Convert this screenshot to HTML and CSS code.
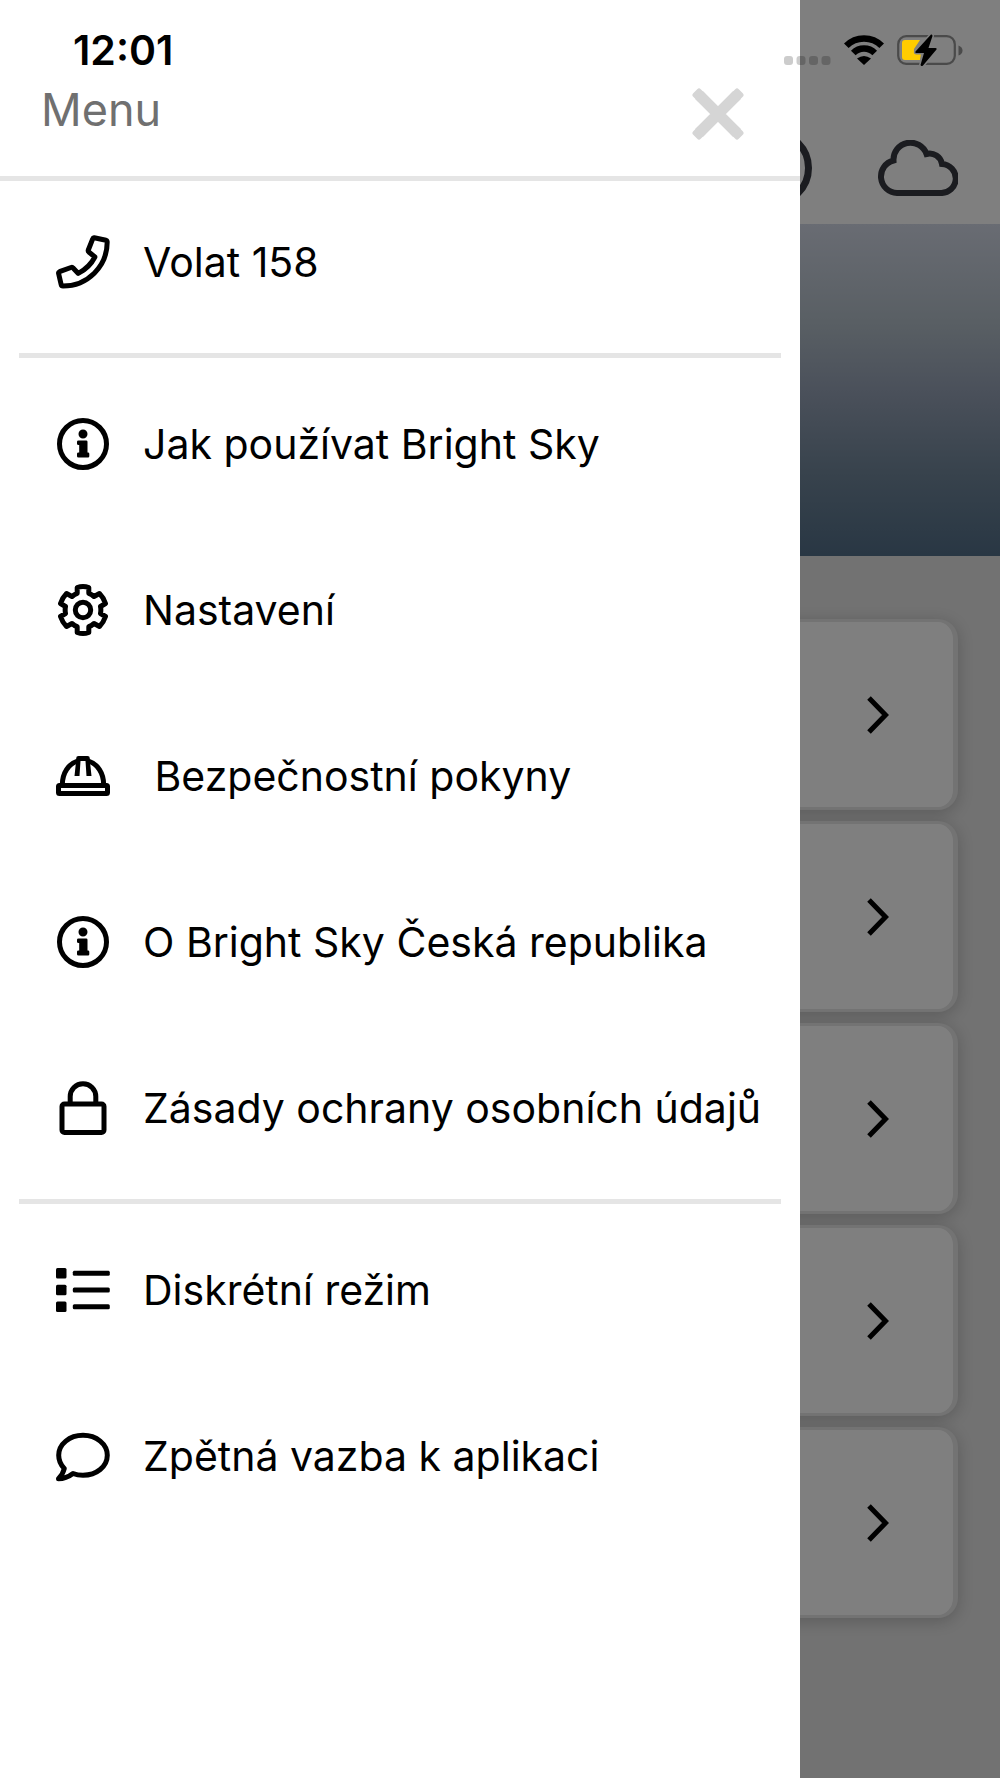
FILE: index.html
```html
<!DOCTYPE html>
<html lang="cs">
<head>
<meta charset="utf-8">
<meta name="viewport" content="width=device-width, initial-scale=1">
<title>Bright Sky – Menu</title>
<link rel="stylesheet" href="styles.css">
</head>
<body>
<div class="screen">
  <div class="page">
    <header class="topbar">
      <button class="icon-button" type="button" aria-label="Profil">
        <svg width="78" height="78" viewBox="0 0 78 78" fill="none" stroke="currentColor" stroke-width="7"><circle cx="39" cy="39" r="35.5"/></svg>
      </button>
      <button class="icon-button" type="button" aria-label="Rychlé opuštění">
        <svg width="81" height="56" viewBox="0 0 81 56" fill="none" stroke="currentColor" stroke-width="6"><path d="M20 53H63.500A14.500 14.500 0 0 0 65 24A12.500 12.500 0 0 0 49.500 14A17 17 0 0 0 16.500 20.500A16.500 16.500 0 0 0 20 53Z"/></svg>
      </button>
    </header>
    <div class="hero"></div>
    <main class="cards">
      <a class="card" href="#" aria-label="Karta 1"><svg class="chevron" viewBox="0 0 22 38"><path d="M2 2L18.500 19L2 36"/></svg></a>
      <a class="card" href="#" aria-label="Karta 2"><svg class="chevron" viewBox="0 0 22 38"><path d="M2 2L18.500 19L2 36"/></svg></a>
      <a class="card" href="#" aria-label="Karta 3"><svg class="chevron" viewBox="0 0 22 38"><path d="M2 2L18.500 19L2 36"/></svg></a>
      <a class="card" href="#" aria-label="Karta 4"><svg class="chevron" viewBox="0 0 22 38"><path d="M2 2L18.500 19L2 36"/></svg></a>
      <a class="card" href="#" aria-label="Karta 5"><svg class="chevron" viewBox="0 0 22 38"><path d="M2 2L18.500 19L2 36"/></svg></a>
    </main>
  </div>

  <div class="scrim"></div>

  <aside class="drawer">
    <header class="drawer-header">
      <h1 class="drawer-title">Menu</h1>
      <button class="close" type="button" aria-label="Zavřít">
        <svg width="52" height="52" viewBox="0 0 52 52"><path d="M7 7L45 45M45 7L7 45" stroke="currentColor" stroke-width="11"/><path d="M7 3L3 7L7 11L11 7ZM45 3L49 7L45 11L41 7ZM7 49L3 45L7 41L11 45ZM45 49L49 45L45 41L41 45Z" fill="currentColor" stroke="currentColor" stroke-width="5" stroke-linejoin="round"/></svg>
      </button>
    </header>
    <nav class="menu">
      <ul class="menu-group">
        <li><a class="item" href="#">
          <svg class="icon" viewBox="0 0 54 54"><path d="M38.200 2.700L50 5.300Q51.200 5.700 51.200 7C51.200 31.500 31.500 51 7 51Q5.500 51 5.200 49.700L2.600 38.500Q2.300 37.200 3.500 36.700L15 32.500Q16.300 32 17.100 33L22.300 38.400Q33.500 32.500 38.900 22L32.800 17Q31.900 16.200 32.300 15L36.800 3.600Q37.200 2.500 38.200 2.700Z"/></svg>
          <span>Volat 158</span></a></li>
      </ul>
      <hr class="divider">
      <ul class="menu-group">
        <li><a class="item" href="#">
          <svg class="icon" viewBox="0 0 54 54"><circle cx="27" cy="27" r="23.500"/><path class="solid" d="M27 12.500a4.500 4.500 0 1 1 0 9a4.500 4.500 0 1 1 0-9ZM22.500 23.500H30.200Q31.500 23.500 31.500 24.800V35.500H32Q33.300 35.500 33.300 36.800V39.200Q33.300 40.500 32 40.500H22.500Q21 40.500 21 39.200V36.800Q21 35.500 22.500 35.500H23.200V28H22.500Q21 28 21 26.800V24.800Q21 23.500 22.500 23.500Z"/></svg>
          <span>Jak používat Bright Sky</span></a></li>
        <li><a class="item" href="#">
          <svg class="icon" viewBox="0 0 54 54"><path d="M21.200 4.500Q27 2.300 32.800 4.500V10.300Q35.500 11.300 38 13.500L43.500 10.500Q47.500 14.500 49.500 20.500L44.500 23.500Q45.200 27 44.500 30.500L49.500 33.500Q47.500 39.500 43.500 43.500L38 40.500Q35.500 42.700 32.800 43.700V49.500Q27 51.700 21.200 49.500V43.700Q18.500 42.700 16 40.500L10.500 43.500Q6.500 39.500 4.500 33.500L9.500 30.500Q8.800 27 9.500 23.500L4.500 20.500Q6.500 14.500 10.500 10.500L16 13.500Q18.500 11.300 21.200 10.300Z"/><circle cx="27" cy="27" r="7.700"/></svg>
          <span>Nastavení</span></a></li>
        <li><a class="item" href="#">
          <svg class="icon" viewBox="0 0 54 54"><rect x="2.500" y="36.500" width="49" height="8" rx="1"/><path d="M6.300 36C6.300 24 12.500 15 21.500 12M47.700 36C47.700 24 41.500 15 32.500 12"/><path class="solid" d="M22.500 7H31.500Q33.800 7 33.800 9.300V11L35.500 27H30.500L29.500 12H24.500L23.500 27H18.500L20.200 11V9.300Q20.200 7 22.500 7Z"/></svg>
          <span>&nbsp;Bezpečnostní pokyny</span></a></li>
        <li><a class="item" href="#">
          <svg class="icon" viewBox="0 0 54 54"><circle cx="27" cy="27" r="23.500"/><path class="solid" d="M27 12.500a4.500 4.500 0 1 1 0 9a4.500 4.500 0 1 1 0-9ZM22.500 23.500H30.200Q31.500 23.500 31.500 24.800V35.500H32Q33.300 35.500 33.300 36.800V39.200Q33.300 40.500 32 40.500H22.500Q21 40.500 21 39.200V36.800Q21 35.500 22.500 35.500H23.200V28H22.500Q21 28 21 26.800V24.800Q21 23.500 22.500 23.500Z"/></svg>
          <span>O Bright Sky Česká republika</span></a></li>
        <li><a class="item" href="#">
          <svg class="icon" viewBox="0 0 54 54"><rect x="6" y="23" width="42" height="28.500" rx="2.500"/><path d="M14.200 23V15.500A12.800 12.800 0 0 1 39.800 15.500V23"/></svg>
          <span>Zásady ochrany osobních údajů</span></a></li>
      </ul>
      <hr class="divider">
      <ul class="menu-group">
        <li><a class="item" href="#">
          <svg class="icon" viewBox="0 0 54 54"><g class="solid"><rect x="0" y="5" width="10.500" height="10.500" rx="1.500"/><rect x="0" y="21.800" width="10.500" height="10.500" rx="1.500"/><rect x="0" y="38.500" width="10.500" height="10.500" rx="1.500"/><rect x="16.800" y="7.700" width="37" height="5" rx="1.500"/><rect x="16.800" y="24.500" width="37" height="5" rx="1.500"/><rect x="16.800" y="41.300" width="37" height="5" rx="1.500"/></g></svg>
          <span>Diskrétní režim</span></a></li>
        <li><a class="item" href="#">
          <svg class="icon" viewBox="0 0 54 54"><path d="M27 6.300C40.500 6.300 51.300 15 51.300 26.300S40.500 46.300 27 46.300Q21.500 46.300 17 44.500Q10 49.800 2.500 49.800Q7 45 8.300 39.500Q2.700 34 2.700 26.300C2.700 15 13.500 6.300 27 6.300Z"/></svg>
          <span>Zpětná vazba k aplikaci</span></a></li>
      </ul>
    </nav>
  </aside>

  <div class="status">
    <time class="clock">12:01</time>
    <div class="status-icons">
      <svg width="47" height="30" viewBox="0 0 47 30" fill="#000" fill-opacity=".2"><rect x="0" y="21" width="9" height="9" rx="3"/><rect x="12.500" y="21" width="9" height="9" rx="3"/><rect x="25" y="21" width="9" height="9" rx="3"/><rect x="37.500" y="21" width="9" height="9" rx="3"/></svg>
      <svg width="40" height="30" viewBox="0 0 40 30"><path d="M2.300 10.800A25 25 0 0 1 37.700 10.800M9.300 18A15 15 0 0 1 30.700 18" fill="none" stroke="#000" stroke-width="6.500"/><path d="M20 30L13 23.500Q20 18.500 27 23.500Z"/></svg>
      <svg width="66" height="32" viewBox="0 0 66 32"><rect x="1.200" y="2.200" width="56.600" height="27.600" rx="8" fill="none" stroke="#4a4a4a" stroke-width="2.200"/><path d="M61.500 11.500Q65.500 13 65.500 16.500T61.500 21.500Z" fill="#4a4a4a"/><path d="M8 6H23L17 15Q16.500 19 19 19H24L23 26H8Q5 26 5 23V9Q5 6 8 6Z" fill="#fc0"/><path d="M34 .5L18.500 17.500Q18 19 19.500 19H27L23.500 31Q24.500 33 26 31.500L39.500 15.500Q40 14 38.500 14H31.500L35.500 2Q35.500 0 34 .5Z" stroke="#808080" stroke-width="3" paint-order="stroke"/></svg>
    </div>
  </div>
</div>
</body>
</html>
```
FILE: styles.css
```css
* { box-sizing: border-box; }

body {
  margin: 0;
  font-family: Inter, "Liberation Sans", sans-serif;
  color: #000;
}

/* page, scrim and drawer share one grid cell and stack in source order */
.screen {
  position: relative;
  display: grid;
  min-height: 100vh;
}

.page,
.scrim,
.drawer { grid-area: 1 / 1; }

.page {
  display: flex;
  flex-direction: column;
  background: #e4e4e4;
}

.topbar {
  display: flex;
  justify-content: flex-end;
  align-items: center;
  gap: 65px;
  height: 224px;
  padding: 112px 42px 0 0;
  background: #fff;
}

.icon-button,
.close {
  display: flex;
  padding: 0;
  border: 0;
  background: none;
  color: #363840;
}

.hero {
  height: 332px;
  background: linear-gradient(#d2d8e6, #b2bec8 30%, #96a2b6 50%, #70869a 75%, #526e88);
}

.cards {
  display: flex;
  flex-direction: column;
  gap: 11px;
  padding: 63px 42px;
}

.card {
  display: flex;
  justify-content: flex-end;
  align-items: center;
  height: 191px;
  padding-right: 64px;
  border: solid #e6e6e6;
  border-width: 3px 5px;
  border-radius: 20px;
  background: #fff;
  box-shadow: 0 3px 16px rgba(0, 0, 0, .2);
}

.chevron {
  width: 22px;
  height: 38px;
  fill: none;
  stroke: #000;
  stroke-width: 5;
}

.scrim { background: rgba(0, 0, 0, .5); }

.drawer {
  width: 80%;
  background: #fff;
}

.drawer-header {
  display: flex;
  justify-content: space-between;
  height: 181px;
  padding: 80px 56px 0 41px;
  border-bottom: 5px solid #e5e5e5;
}

.drawer-title {
  margin: 0;
  font-size: 45px;
  font-weight: 400;
  line-height: 60px;
  color: #707070;
}

.close {
  align-self: flex-start;
  padding-top: 8px;
  color: #d5d5d5;
}

.menu-group {
  display: grid;
  gap: 4px;
  margin: 0;
  padding: 0;
  list-style: none;
}

.item {
  display: flex;
  align-items: center;
  gap: 33px;
  height: 162px;
  padding-left: 56px;
  font-size: 41px;
  line-height: 50px;
  color: #000;
  text-decoration: none;
  white-space: nowrap;
}

.icon {
  width: 54px;
  height: 54px;
  fill: none;
  stroke: #000;
  stroke-width: 5;
  stroke-linejoin: round;
}

.icon .solid {
  fill: #000;
  stroke: none;
}

.divider {
  height: 5px;
  margin: 10px 19px 5px;
  border: 0;
  background: #e5e5e5;
}

/* the system bar floats above the drawer and the scrim */
.status {
  position: absolute;
  inset: 0 0 auto;
  display: flex;
  justify-content: space-between;
  align-items: center;
  height: 100px;
  padding: 0 37px 0 73px;
}

.clock {
  font-size: 41px;
  font-weight: 600;
}

.status-icons {
  display: flex;
  align-items: center;
  gap: 13px;
}
```
